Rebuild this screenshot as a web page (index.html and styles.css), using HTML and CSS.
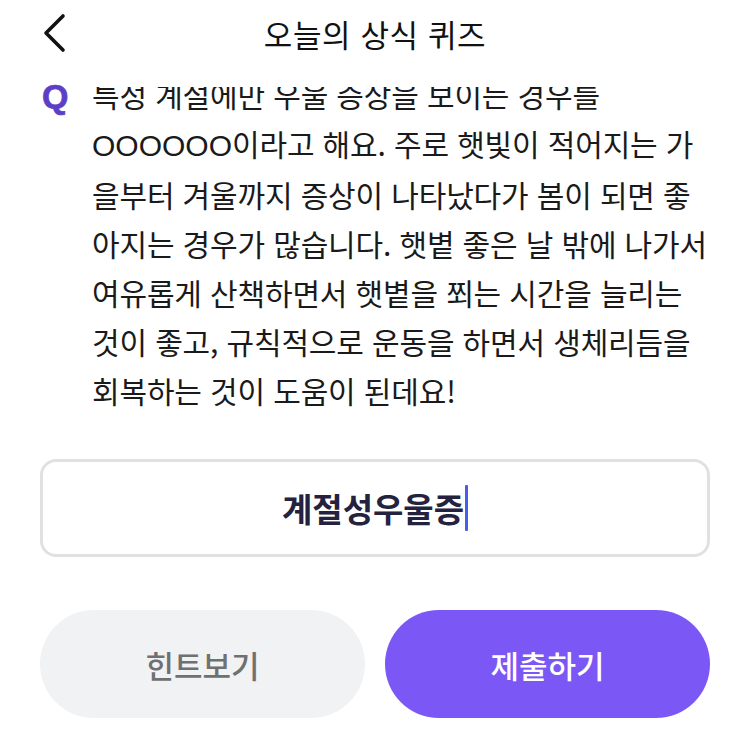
FILE: index.html
```html
<!DOCTYPE html>
<html lang="ko">
<head>
<meta charset="utf-8">
<title>오늘의 상식 퀴즈</title>
<meta name="viewport" content="width=device-width, initial-scale=1.0">
<link rel="stylesheet" href="styles.css">
</head>
<body>
	<header class="topbar">
		<button class="back" aria-label="뒤로">
			<svg width="26" height="40" viewBox="0 0 26 40"><polyline points="22,3 5,20 22,37" fill="none" stroke="#111" stroke-width="3.6" stroke-linecap="round" stroke-linejoin="round"/></svg>
		</button>
		<h1 class="title">오늘의 상식 퀴즈</h1>
		<span></span>
	</header>

	<main class="quiz">
		<span class="q-mark">Q</span>
		<div class="q-scroll">
			<p class="q-text">특정 계절에만 우울 증상을 보이는 경우를<br><span class="blank">OOOOOO</span>이라고 해요. 주로 햇빛이 적어지는 가<br>을부터 겨울까지 증상이 나타났다가 봄이 되면 좋<br>아지는 경우가 많습니다. 햇볕 좋은 날 밖에 나가서<br>여유롭게 산책하면서 햇볕을 쬐는 시간을 늘리는<br>것이 좋고, 규칙적으로 운동을 하면서 생체리듬을<br>회복하는 것이 도움이 된데요!</p>
		</div>
	</main>

	<div class="answer">
		<span class="answer-text">계절성우울증</span><span class="caret"></span>
	</div>

	<div class="actions">
		<button class="btn hint">힌트보기</button>
		<button class="btn submit">제출하기</button>
	</div>
</body>
</html>
```

FILE: styles.css
```css
body { margin: 0; background: #fff; font-family: "Noto Sans CJK KR", "Noto Sans", sans-serif; color: #111; }

.topbar { height: 66px; padding-bottom: 21px; display: grid; grid-template-columns: 1fr auto 1fr; align-items: center; }
.back { justify-self: start; margin-left: 41px; padding: 0; border: none; background: none; width: 26px; height: 40px; }
.title { margin: 0; font-size: 31px; font-weight: 400; letter-spacing: 0.6px; color: #111; }

/* Q stays put, the text next to it is scrolled a little under the header */
.quiz { display: flex; align-items: flex-start; padding: 0 20px 0 42px; }
.q-mark { width: 50px; flex: none; margin-top: -15px; font-family: "Liberation Sans", Arial, sans-serif; font-weight: 700; font-size: 34px; line-height: 49px; color: #5b3fc6; -webkit-text-stroke: 0.7px #5b3fc6; }
.q-scroll { height: 330px; overflow: hidden; }
.q-text { margin: -17px 0 0; font-size: 30px; line-height: 49px; letter-spacing: -0.15px; color: #1a1a1a; white-space: nowrap; }
.blank { font-family: "Liberation Sans", Arial, sans-serif; letter-spacing: 0; }

.answer { margin: 42px 40px 0; height: 92px; border: 3px solid #e1e1e3; border-radius: 16px; display: flex; align-items: center; justify-content: center; }
.answer-text { font-size: 33px; font-weight: 700; color: #24223f; }
.caret { width: 3px; height: 46px; margin-left: 1px; background: #4a5de8; border-radius: 1px; }

.actions { margin: 53px 40px 0; display: flex; gap: 20px; }
.btn { flex: 1; height: 108px; border: none; border-radius: 54px; font-family: inherit; font-size: 31px; font-weight: 500; }
.hint { background: #f1f2f4; color: #707070; }
.submit { background: #7b58f5; color: #fff; }
```
